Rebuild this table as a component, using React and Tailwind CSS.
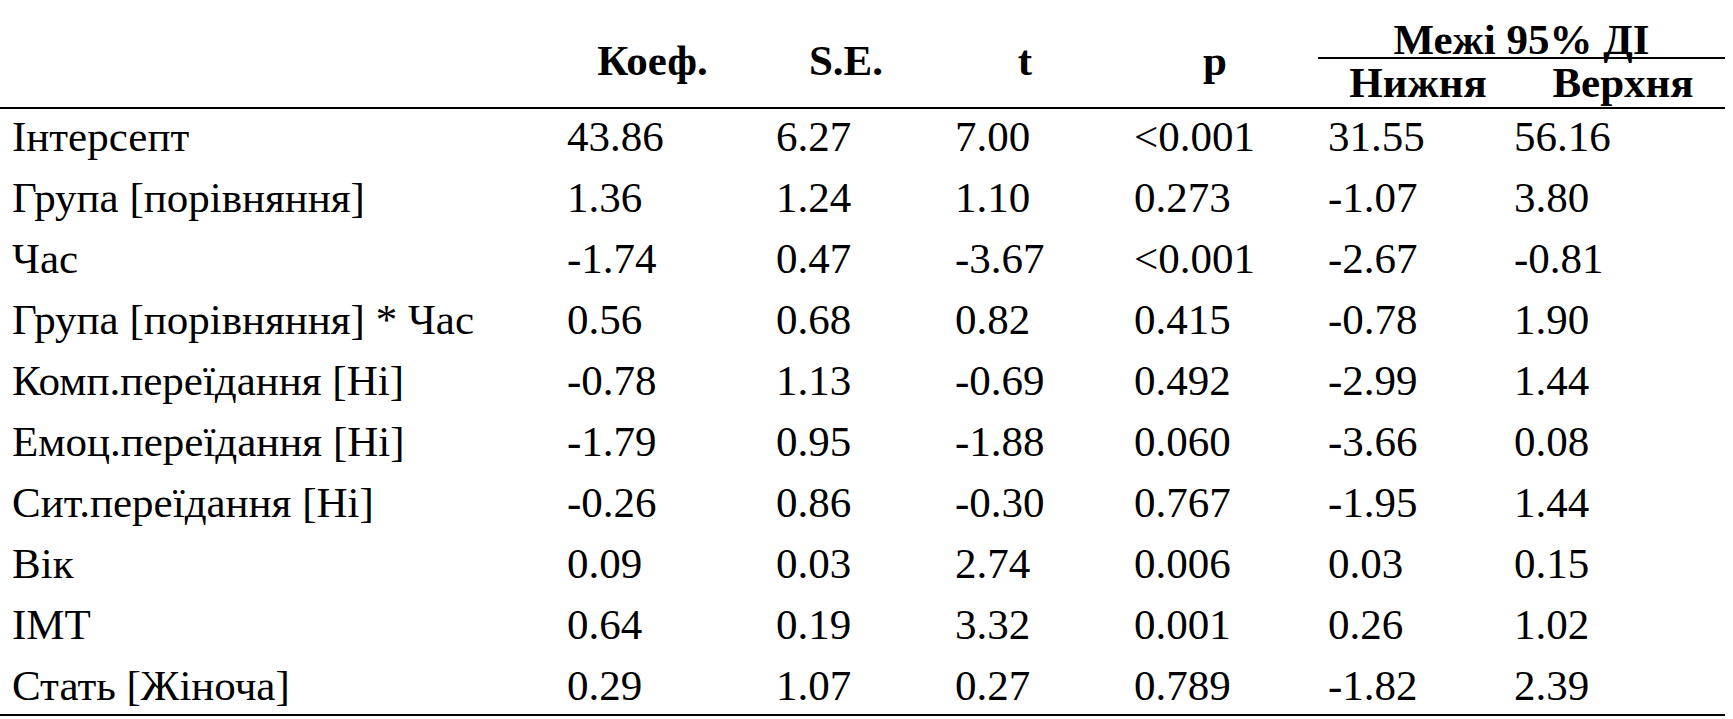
import React from "react";

const COLS = "grid-cols-[567px_209px_179px_179px_194px_186px_211px]";
const SERIF = "[font-family:'Liberation_Serif',serif]";

const rows = [
  ["Інтерсепт", "43.86", "6.27", "7.00", "<0.001", "31.55", "56.16"],
  ["Група [порівняння]", "1.36", "1.24", "1.10", "0.273", "-1.07", "3.80"],
  ["Час", "-1.74", "0.47", "-3.67", "<0.001", "-2.67", "-0.81"],
  ["Група [порівняння] * Час", "0.56", "0.68", "0.82", "0.415", "-0.78", "1.90"],
  ["Комп.переїдання [Ні]", "-0.78", "1.13", "-0.69", "0.492", "-2.99", "1.44"],
  ["Емоц.переїдання [Ні]", "-1.79", "0.95", "-1.88", "0.060", "-3.66", "0.08"],
  ["Сит.переїдання [Ні]", "-0.26", "0.86", "-0.30", "0.767", "-1.95", "1.44"],
  ["Вік", "0.09", "0.03", "2.74", "0.006", "0.03", "0.15"],
  ["ІМТ", "0.64", "0.19", "3.32", "0.001", "0.26", "1.02"],
  ["Стать [Жіноча]", "0.29", "1.07", "0.27", "0.789", "-1.82", "2.39"],
];

export default function App() {
  return (
    <div className="min-h-screen bg-white text-black text-[43px] [font-family:'Liberation_Serif',serif]">
      <div className="w-[1725px] [font-family:'Liberation_Serif',serif]">
        {/* header */}
        <div className={`grid ${COLS} grid-rows-[59px_48px] border-b-2 border-black font-bold leading-[35px] [font-family:'Liberation_Serif',serif]`}>
          <div className="row-span-2" />
          <div className="row-span-2 pt-[43px] pr-[38px] text-center [font-family:'Liberation_Serif',serif]">Коеф.</div>
          <div className="row-span-2 pt-[43px] pr-[39px] text-center [font-family:'Liberation_Serif',serif]">S.E.</div>
          <div className="row-span-2 pt-[43px] pr-[39px] text-center [font-family:'Liberation_Serif',serif]">t</div>
          <div className="row-span-2 pt-[43px] pr-[32px] text-center [font-family:'Liberation_Serif',serif]">p</div>
          <div className="col-span-2 -ml-[10px] border-b-2 border-black pt-[22px] text-center [font-family:'Liberation_Serif',serif]">
            Межі 95% ДІ
          </div>
          <div className="col-start-6 row-start-2 pt-[6px] pr-[6px] text-center [font-family:'Liberation_Serif',serif]">Нижня</div>
          <div className="col-start-7 row-start-2 pt-[6px] pl-[7px] text-center [font-family:'Liberation_Serif',serif]">Верхня</div>
        </div>

        {/* body */}
        <div className="border-b-2 border-black">
          {rows.map((r, i) => (
            <div
              key={i}
              className={`grid ${COLS} leading-[56px] ${i === rows.length - 1 ? "pb-0" : "pb-[5px]"}`}
            >
              <div className={`pl-[12px] whitespace-nowrap ${SERIF}`}>{r[0]}</div>
              {r.slice(1).map((v, j) => (
                <div key={j} className={`whitespace-nowrap ${SERIF}`}>
                  {v}
                </div>
              ))}
            </div>
          ))}
        </div>
      </div>
    </div>
  );
}
